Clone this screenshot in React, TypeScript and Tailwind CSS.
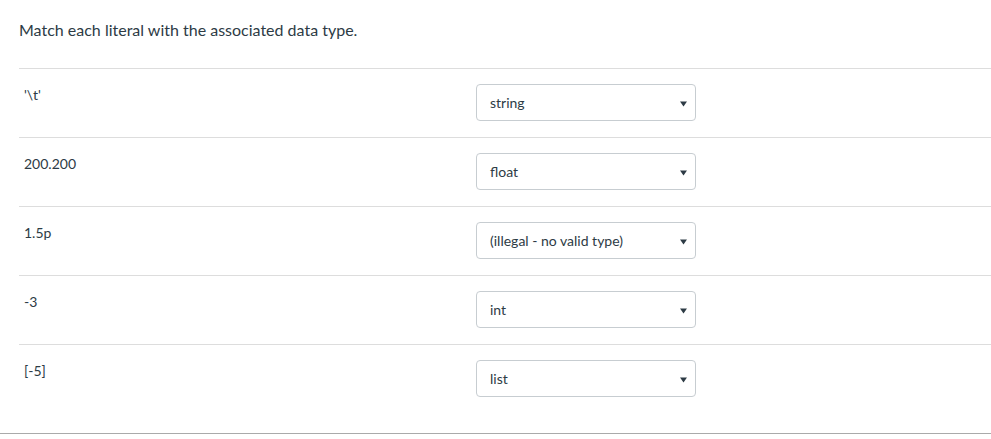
import React from "react";

const rows = [
  { literal: "'\\t'", answer: "string" },
  { literal: "200.200", answer: "float" },
  { literal: "1.5p", answer: "(illegal - no valid type)" },
  { literal: "-3", answer: "int" },
  { literal: "[-5]", answer: "list" },
];

const Dropdown = ({ value }: { value: string }) => (
  <div className="flex h-[37px] w-[220px] items-center justify-between rounded-[4px] border border-[#c7cdd1] bg-white pl-[13px] pr-[8px] text-[14px] text-[#2d3b45]">
    <span className="-mt-[1px]">{value}</span>
    <svg width="7" height="6" viewBox="0 0 7 6" className="mt-[2px]">
      <path d="M0 0.5 L7 0.5 L3.5 5.5 Z" fill="#2d3b45" />
    </svg>
  </div>
);

export default function App() {
  return (
    <div className="min-h-[439px] bg-white font-['Lato','Liberation_Sans',sans-serif] text-[#2d3b45]">
      <div className="pl-[19px]">
        <p className="pt-[20px] text-[16px] leading-[20px]">
          Match each literal with the associated data type.
        </p>
        <div className="mt-[28px]">
          {rows.map((row) => (
            <div
              key={row.literal}
              className="flex h-[69px] border-t border-[#dddddd]"
            >
              <div className="w-[457px] pl-[5px] pt-[16px] text-[14px] leading-[20px]">
                {row.literal}
              </div>
              <div className="pt-[15px]">
                <Dropdown value={row.answer} />
              </div>
            </div>
          ))}
        </div>
      </div>
      <div className="mt-[20px] border-t border-[#aaaaaa]" />
    </div>
  );
}
